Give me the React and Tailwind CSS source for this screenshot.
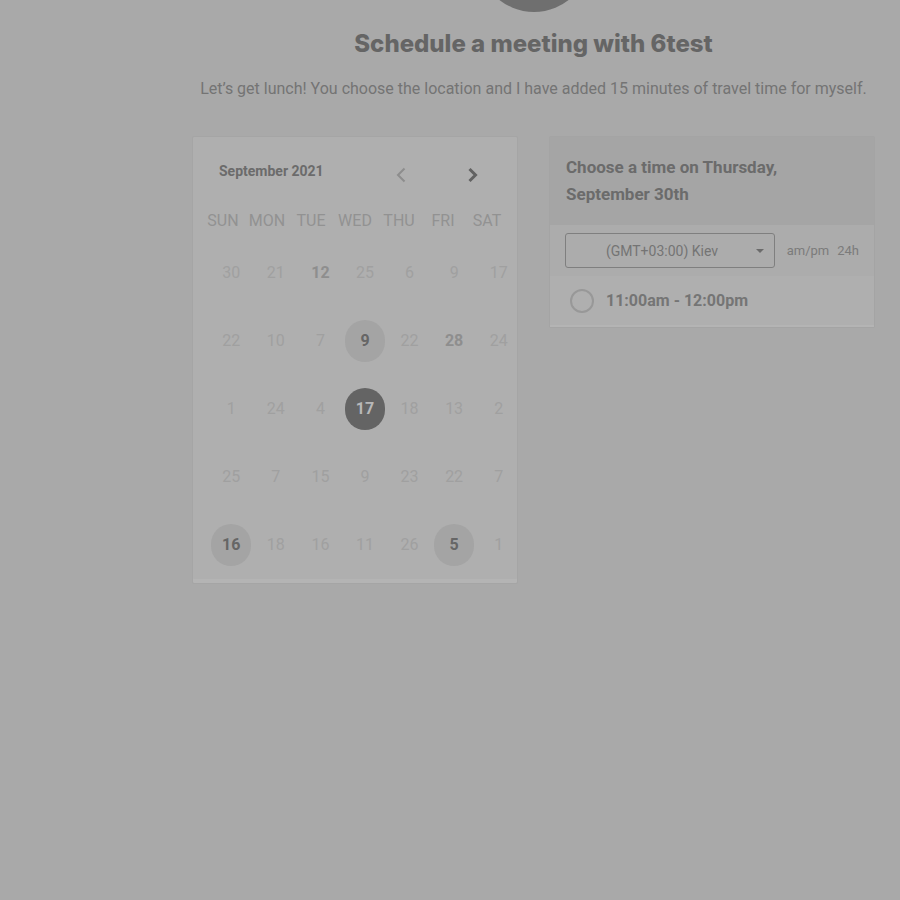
import React from "react";

const WEEKDAYS = ["SUN", "MON", "TUE", "WED", "THU", "FRI", "SAT"];

const WEEKS = [
  [30, 21, 12, 25, 6, 9, 17],
  [22, 10, 7, 9, 22, 28, 24],
  [1, 24, 4, 17, 18, 13, 2],
  [25, 7, 15, 9, 23, 22, 7],
  [16, 18, 16, 11, 26, 5, 1],
];

const DAY_KINDS = {
  "0-2": "bold",
  "1-3": "open",
  "1-5": "bold",
  "2-3": "selected",
  "4-0": "open",
  "4-5": "open",
};

const DAY_STYLES = {
  plain: "text-[#a0a0a0]",
  bold: "font-bold text-[#8e8e8e]",
  open: "bg-[#a4a4a4] font-bold text-[#666666]",
  selected: "bg-[#646464] font-bold text-[#b8b8b8]",
};

function Calendar() {
  return (
    <section className="h-fit overflow-hidden rounded-xs border border-[#a5a5a5] bg-[#afafaf] pb-1 shadow-[inset_0_-4px_0_#b4b4b4]">
      <header className="flex h-[67px] items-center pt-1 pl-[26px]">
        <h2 className="flex-1 pb-1 text-sm font-bold text-[#6b6b6b]">September 2021</h2>
        <div className="flex w-[160px] justify-center gap-12">
          <button type="button" aria-label="Previous month" className="flex size-6 items-center justify-center pt-1">
            <svg viewBox="0 0 10 16" className="h-4 w-[10px]" fill="none" stroke="#8d8d8d" strokeWidth="2">
              <path d="M8.5 1.5 2 8l6.500 6.500" />
            </svg>
          </button>
          <button type="button" aria-label="Next month" className="flex size-6 items-center justify-center pt-1">
            <svg viewBox="0 0 10 16" className="h-4 w-[10px]" fill="none" stroke="#626262" strokeWidth="3">
              <path d="M1.500 2 7.500 8l-6 6" />
            </svg>
          </button>
        </div>
      </header>
      <table className="block w-full">
        <thead className="block px-2">
          <tr className="grid grid-cols-7">
            {WEEKDAYS.map((day) => (
              <th key={day} scope="col" className="h-[34px] text-center text-base leading-[34px] font-normal text-[#929292]">
                {day}
              </th>
            ))}
          </tr>
        </thead>
        <tbody className="-mr-1 block pt-px pl-4">
          {WEEKS.map((week, row) => (
            <tr key={row} className="grid h-[68px] grid-cols-7">
              {week.map((day, col) => (
                <td key={col} className="flex items-center justify-center">
                  <button
                    type="button"
                    className={`h-[42px] w-10 rounded-full text-base ${DAY_STYLES[DAY_KINDS[`${row}-${col}`] || "plain"]}`}
                  >
                    {day}
                  </button>
                </td>
              ))}
            </tr>
          ))}
        </tbody>
      </table>
    </section>
  );
}

function TimePicker() {
  return (
    <section className="h-fit rounded-xs border border-[#a4a4a4] bg-[#afafaf]">
      <h2 className="bg-[#a5a5a5] px-4 py-[17px] text-[17px] leading-[27px] font-bold text-[#6b6b6b]">
        Choose a time on Thursday, September 30th
      </h2>
      <div className="flex items-center bg-[#acacac] px-[15px] py-2 text-[13px] text-[#7b7b7b]">
        <div className="relative w-[210px]">
          <select
            aria-label="Time zone"
            className="h-[35px] w-full appearance-none rounded-[3px] border border-[#7f7f7f] bg-transparent pr-4 text-center text-sm text-[#747474]"
          >
            <option>(GMT+03:00) Kiev</option>
          </select>
          <svg viewBox="0 0 8 4" className="pointer-events-none absolute top-4 right-[11px] h-1 w-2" fill="#6b6b6b">
            <path d="M0 0h8L4 4z" />
          </svg>
        </div>
        <div className="flex flex-1 justify-end gap-2">
          <button type="button">am/pm</button>
          <button type="button">24h</button>
        </div>
      </div>
      <label className="flex h-[51px] items-center gap-3 border-b-2 border-[#b4b4b4] pl-5 text-base font-bold text-[#757575]">
        <input type="radio" name="slot" className="size-6 appearance-none rounded-full border-2 border-[#989898]" />
        11:00am - 12:00pm
      </label>
    </section>
  );
}

export default function App() {
  return (
    <main className="min-h-screen overflow-hidden bg-[#a9a9a9] pr-[25px] pl-48 font-['Roboto',sans-serif]">
      <div className="mx-auto -mt-[100px] size-28 rounded-full bg-[#6f6f6f]" />
      <h1 className="mt-4 text-center font-['Inter',sans-serif] text-2xl font-extrabold text-[#656565]">
        Schedule a meeting with 6test
      </h1>
      <p className="mt-[17px] text-center text-base whitespace-nowrap text-[#747474]">
        Let’s get lunch! You choose the location and I have added 15 minutes of travel time for myself.
      </p>
      <div className="mt-[35px] grid grid-cols-2 gap-[31px]">
        <Calendar />
        <TimePicker />
      </div>
    </main>
  );
}
